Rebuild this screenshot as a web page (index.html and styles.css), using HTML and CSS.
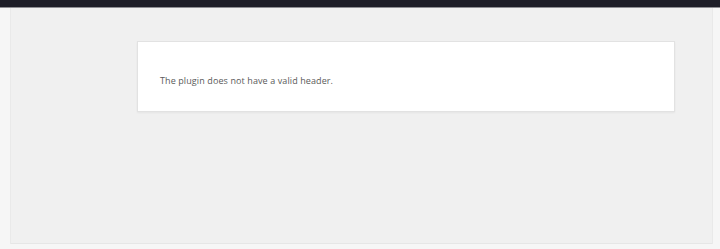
FILE: index.html
```html
<!DOCTYPE html>
<html lang="en">
<head>
<meta charset="utf-8">
<title>Plugin error</title>
<link rel="stylesheet" href="styles.css">
</head>
<body>
<div class="topbar"></div>
<div class="frame">
  <div class="side side-left"></div>
  <main class="main">
    <div class="notice">
      <p class="notice-text">The plugin does not have a valid header.</p>
    </div>
  </main>
  <div class="side side-right"></div>
</div>
<div class="bottom"></div>
</body>
</html>
```
FILE: styles.css
```css
html, body {
  margin: 0;
  padding: 0;
  width: 720px;
  height: 249px;
  overflow: hidden;
  background: #f3f3f3;
  font-family: "Open Sans", "Liberation Sans", sans-serif;
}
.topbar {
  height: 7px;
  background: #1e1e28;
  border-bottom: 1px solid #8e8e93;
}
.frame {
  display: flex;
  height: 236px;
}
.side {
  background: #f6f6f6;
}
.side-left {
  width: 10px;
  border-right: 1px solid #e9e9e9;
}
.side-right {
  width: 7px;
  border-left: 1px solid #e9e9e9;
}
.main {
  flex: 1;
  background: #f0f0f0;
  padding: 33px 36px 0 126px;
  border-bottom: 1px solid #e6e6e6;
}
.notice {
  width: 536px;
  height: 69px;
  background: #ffffff;
  border: 1px solid #e2e2e2;
  box-shadow: 0 1px 2px rgba(0,0,0,0.05);
  display: flex;
  align-items: center;
}
.notice-text {
  margin: 0 0 0 22px;
  padding-top: 7px;
  font-size: 9px;
  color: #5a5a5a;
  letter-spacing: 0.1px;
}
.bottom {
  height: 5px;
  background: #f6f6f6;
}
```
